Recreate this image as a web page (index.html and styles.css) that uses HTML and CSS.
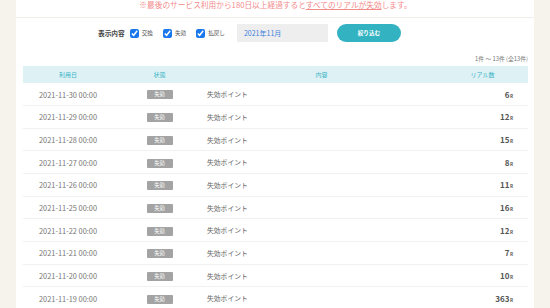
FILE: index.html
```html
<!DOCTYPE html>
<html lang="ja">
<head>
<meta charset="utf-8">
<link rel="stylesheet" href="styles.css">
</head>
<body>
<div class="card">
  <p class="notice">※最後のサービス利用から180日以上経過すると<u>すべてのリアルが失効</u>します。</p>
  <hr class="sep">
  <form class="filter">
    <span class="filter-title">表示内容</span>
    <label class="chk"><input type="checkbox" checked>交換</label>
    <label class="chk"><input type="checkbox" checked>失効</label>
    <label class="chk"><input type="checkbox" checked>払戻し</label>
    <div class="month">2021年11月</div>
    <button type="button" class="btn">絞り込む</button>
  </form>
  <div class="count">1件 ～ 13件 (全13件)</div>
  <table class="list">
    <colgroup><col class="c1"><col class="c2"><col class="c3"><col class="c4"></colgroup>
    <thead>
      <tr><th>利用日</th><th>状態</th><th>内容</th><th>リアル数</th></tr>
    </thead>
    <tbody>
      <tr><td class="date">2021-11-30 00:00</td><td class="st"><span class="badge">失効</span></td><td class="desc">失効ポイント</td><td class="amt">6<small>R</small></td></tr>
      <tr><td class="date">2021-11-29 00:00</td><td class="st"><span class="badge">失効</span></td><td class="desc">失効ポイント</td><td class="amt">12<small>R</small></td></tr>
      <tr><td class="date">2021-11-28 00:00</td><td class="st"><span class="badge">失効</span></td><td class="desc">失効ポイント</td><td class="amt">15<small>R</small></td></tr>
      <tr><td class="date">2021-11-27 00:00</td><td class="st"><span class="badge">失効</span></td><td class="desc">失効ポイント</td><td class="amt">8<small>R</small></td></tr>
      <tr><td class="date">2021-11-26 00:00</td><td class="st"><span class="badge">失効</span></td><td class="desc">失効ポイント</td><td class="amt">11<small>R</small></td></tr>
      <tr><td class="date">2021-11-25 00:00</td><td class="st"><span class="badge">失効</span></td><td class="desc">失効ポイント</td><td class="amt">16<small>R</small></td></tr>
      <tr><td class="date">2021-11-22 00:00</td><td class="st"><span class="badge">失効</span></td><td class="desc">失効ポイント</td><td class="amt">12<small>R</small></td></tr>
      <tr><td class="date">2021-11-21 00:00</td><td class="st"><span class="badge">失効</span></td><td class="desc">失効ポイント</td><td class="amt">7<small>R</small></td></tr>
      <tr><td class="date">2021-11-20 00:00</td><td class="st"><span class="badge">失効</span></td><td class="desc">失効ポイント</td><td class="amt">10<small>R</small></td></tr>
      <tr><td class="date">2021-11-19 00:00</td><td class="st"><span class="badge">失効</span></td><td class="desc">失効ポイント</td><td class="amt">363<small>R</small></td></tr>
    </tbody>
  </table>
</div>
</body>
</html>
```

FILE: styles.css
```css
html, body {
  margin: 0;
  padding: 0;
}
body {
  background: #f6f3ed;
  font-family: "Noto Sans CJK JP", "Noto Sans", sans-serif;
  color: #666;
  height: 308px;
  overflow: hidden;
}
.card {
  background: #fff;
  margin: 0 16px;
  padding: 0 6px 0 7px;
  height: 308px;
}
.notice {
  margin: 0;
  height: 16px;
  padding-top: 1px;
  font-size: 7.7px;
  line-height: 8px;
  color: #f38b8b;
  text-align: center;
}
.notice u {
  text-decoration-thickness: 0.5px;
  text-underline-offset: 1px;
}
.sep {
  border: 0;
  height: 1px;
  background: #f2efea;
  margin: 0 -6px 0 -7px;
}
.filter {
  display: flex;
  align-items: center;
  height: 18px;
  margin: 6px 0 0;
  padding-left: 75px;
}
.filter-title {
  font-size: 6.7px;
  font-weight: bold;
  color: #444;
  margin-right: 5px;
}
.chk {
  display: flex;
  align-items: center;
  font-size: 5.6px;
  color: #555;
  margin-right: 10px;
}
.chk:last-of-type {
  margin-right: 12px;
}
.chk input {
  width: 9px;
  height: 9px;
  margin: 0 3px 0 0;
  accent-color: #1a78ec;
}
.month {
  width: 84px;
  height: 18px;
  background: #eeeeee;
  color: #3a80dc;
  font-size: 7px;
  line-height: 18px;
  padding-left: 7px;
  margin-right: 9px;
}
.btn {
  width: 64px;
  height: 18px;
  border: 0;
  border-radius: 9px;
  background: #33b3c2;
  color: #fff;
  font-family: inherit;
  font-size: 5.6px;
  font-weight: bold;
  padding: 0;
}
.count {
  text-align: right;
  font-size: 5.8px;
  color: #777;
  margin-top: 13px;
  height: 8px;
  line-height: 8px;
}
.list {
  width: 505px;
  table-layout: fixed;
  border-collapse: collapse;
  margin-top: 2.7px;
}
.c1 { width: 90px; }
.c2 { width: 93px; }
.c3 { width: 231px; }
.c4 { width: 91px; }
.list th {
  background: #def2f6;
  color: #3ab2c4;
  font-size: 6px;
  font-weight: normal;
  height: 17.6px;
  padding: 0;
  text-align: center;
}
.list td {
  height: 21.7px;
  padding: 0;
  border-bottom: 1px solid #f1f1f1;
  font-size: 6.8px;
}
.date {
  text-align: center;
  color: #777;
  font-size: 7.4px !important;
}
.st {
  text-align: center;
}
.badge {
  display: inline-block;
  width: 26px;
  height: 9px;
  line-height: 9px;
  background: #a3a3a3;
  color: #fff;
  font-size: 5.3px;
  border-radius: 1px;
  vertical-align: middle;
}
.desc {
  padding-left: 1px !important;
  color: #666;
}
.amt {
  text-align: right;
  padding-right: 15px !important;
  font-weight: bold;
  color: #555;
  font-size: 8px !important;
}
.amt small {
  font-size: 4.5px;
  margin-left: 0.5px;
}
```
